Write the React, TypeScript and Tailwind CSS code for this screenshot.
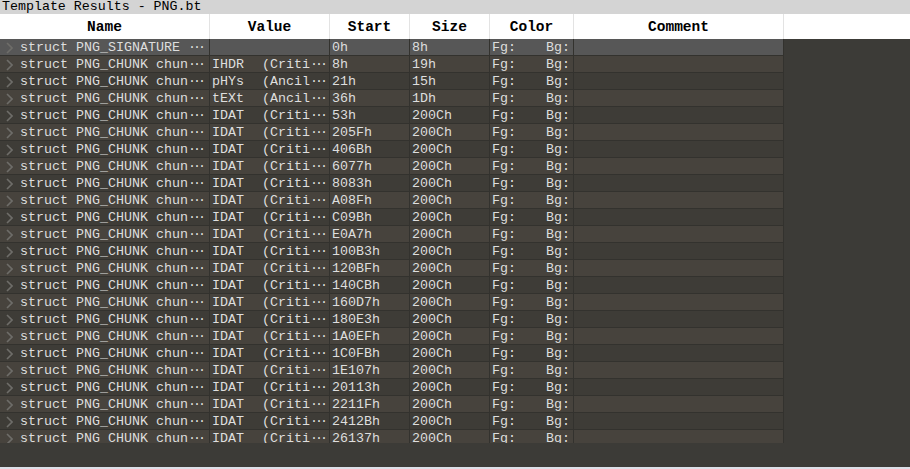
import React from "react";

const starts = [
  "0h", "8h", "21h", "36h", "53h", "205Fh", "406Bh", "6077h", "8083h", "A08Fh", "C09Bh", "E0A7h",
  "100B3h", "120BFh", "140CBh", "160D7h", "180E3h", "1A0EFh", "1C0FBh", "1E107h", "20113h", "2211Fh",
  "2412Bh", "26137h",
];

type Row = { name: string; tag: string; kind: string; start: string; size: string };

const rows: Row[] = starts.map((s, i) => {
  if (i === 0) return { name: "struct PNG_SIGNATURE ", tag: "", kind: "", start: s, size: "8h" };
  const tag = i === 1 ? "IHDR" : i === 2 ? "pHYs" : i === 3 ? "tEXt" : "IDAT";
  const kind = i === 2 || i === 3 ? "(Ancil" : "(Criti";
  const size = i === 1 ? "19h" : i === 2 ? "15h" : i === 3 ? "1Dh" : "200Ch";
  return { name: "struct PNG_CHUNK chun", tag, kind, start: s, size };
});

const mono = { fontFamily: '"Liberation Mono", "DejaVu Sans Mono", monospace' };

function Dots() {
  return <span className="inline-block w-[16px] tracking-[-3px] whitespace-nowrap">···</span>;
}

function Chevron() {
  return (
    <svg width="10" height="16" viewBox="0 0 10 16" className="shrink-0">
      <polyline points="4,3 9,8 4,13" fill="none" stroke="#6e6d69" strokeWidth="1.6" />
    </svg>
  );
}

const headers: { label: string; w: string }[] = [
  { label: "Name", w: "w-[210px]" },
  { label: "Value", w: "w-[120px]" },
  { label: "Start", w: "w-[80px]" },
  { label: "Size", w: "w-[80px]" },
  { label: "Color", w: "w-[84px]" },
  { label: "Comment", w: "w-[210px]" },
];

export default function App() {
  return (
    <div className="w-[910px] h-[469px] flex flex-col bg-[#3c3b37] overflow-hidden" style={mono}>
      <div className="h-[14px] bg-[#d4d4d4] text-black text-[13.3px] leading-[13px] pl-[2px] whitespace-pre overflow-hidden">
        Template Results - PNG.bt
      </div>
      <div className="h-[25px] bg-white flex text-black text-[14.5px] font-bold">
        {headers.map((h) => (
          <div
            key={h.label}
            className={`${h.w} shrink-0 border-r border-[#e3e3e3] flex items-center justify-center pt-[3px]`}
          >
            {h.label}
          </div>
        ))}
        <div className="flex-1" />
      </div>
      <div className="h-[404px] overflow-hidden shrink-0">
        {rows.map((r, i) => {
          const bg = i === 0 ? "bg-[#575757]" : i % 2 === 1 ? "bg-[#47433d]" : "bg-[#3e3c37]";
          return (
            <div
              key={i}
              className={`w-[784px] h-[17px] flex border-b border-[#33322e] text-[13.33px] leading-[16px] text-[#dedede] whitespace-pre ${bg}`}
            >
              <div className="w-[210px] shrink-0 border-r border-[#33322e] flex items-center pl-[3px] pt-[1px] overflow-hidden">
                <Chevron />
                <span className="pl-[7px]">{r.name}</span>
                <Dots />
              </div>
              <div className="w-[120px] shrink-0 border-r border-[#33322e] flex items-center pl-[2px] pt-[1px] overflow-hidden">
                {r.tag && (
                  <>
                    <span className="w-[50px] shrink-0">{r.tag}</span>
                    <span>{r.kind}</span>
                    <Dots />
                  </>
                )}
              </div>
              <div className="w-[80px] shrink-0 border-r border-[#33322e] flex items-center pl-[2px] pt-[1px]">{r.start}</div>
              <div className="w-[80px] shrink-0 border-r border-[#33322e] flex items-center pl-[2px] pt-[1px]">{r.size}</div>
              <div className="w-[84px] shrink-0 border-r border-[#33322e] flex items-center justify-between pl-[2px] pr-[3px] pt-[1px]">
                <span>Fg:</span>
                <span>Bg:</span>
              </div>
              <div className="w-[210px] shrink-0 border-r border-[#33322e]" />
            </div>
          );
        })}
      </div>
      <div className="flex-1" />
      <div className="h-[2px] bg-[#dcdfe8]" />
    </div>
  );
}
